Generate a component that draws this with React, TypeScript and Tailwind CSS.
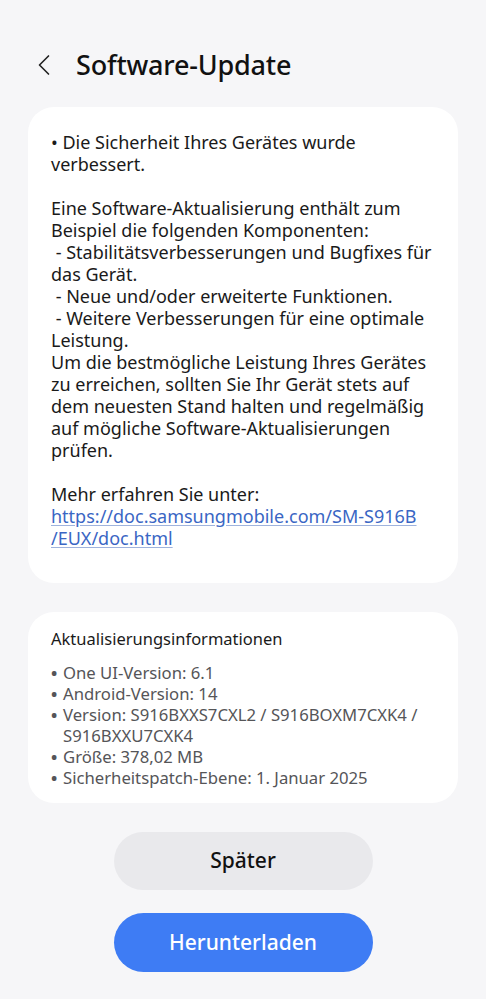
import { ChevronLeft } from 'lucide-react';

const infoLines = [
  'One UI-Version: 6.1',
  'Android-Version: 14',
  'Version: S916BXXS7CXL2 / S916BOXM7CXK4 / S916BXXU7CXK4',
  'Größe: 378,02 MB',
  'Sicherheitspatch-Ebene: 1. Januar 2025',
];

export default function App() {
  return (
    <div
      className="min-h-[999px] w-full bg-[#f6f6f8] text-[#111111]"
      style={{ fontFamily: '"Noto Sans", "Open Sans", sans-serif' }}
    >
      {/* header */}
      <div className="flex items-center h-[130px] pl-[26px] pt-[2px] pb-[2px]">
        <ChevronLeft className="w-[36px] h-[36px] text-[#222]" strokeWidth={1.1} />
        <h1 className="ml-[14px] text-[27px] font-medium tracking-[-0.2px] text-[#111]">Software-Update</h1>
      </div>

      <div className="px-[28px] -mt-[23px]">
        {/* release notes */}
        <div className="bg-white rounded-[26px] pl-[23px] pr-[12px] pt-[24px] pb-[34px] text-[18px] leading-[22px] text-[#1a1a1a]">
          <p>• Die Sicherheit Ihres Gerätes wurde<br />verbessert.</p>
          <p className="mt-[22px]">
            Eine Software-Aktualisierung enthält zum<br />
            Beispiel die folgenden Komponenten:<br />
            &nbsp;- Stabilitätsverbesserungen und Bugfixes für<br />
            das Gerät.<br />
            &nbsp;- Neue und/oder erweiterte Funktionen.<br />
            &nbsp;- Weitere Verbesserungen für eine optimale<br />
            Leistung.<br />
            Um die bestmögliche Leistung Ihres Gerätes<br />
            zu erreichen, sollten Sie Ihr Gerät stets auf<br />
            dem neuesten Stand halten und regelmäßig<br />
            auf mögliche Software-Aktualisierungen<br />
            prüfen.
          </p>
          <p className="mt-[22px]">Mehr erfahren Sie unter:</p>
          <a className="text-[#3a66c4] underline decoration-[#9fb3dd] underline-offset-[2px] whitespace-nowrap">
            https://doc.samsungmobile.com/SM-S916B<br />/EUX/doc.html
          </a>
        </div>

        {/* update info */}
        <div className="mt-[29px] bg-white rounded-[26px] pl-[23px] pr-[12px] pt-[16px] pb-[15px]">
          <p className="text-[16.5px] leading-[22px] text-[#1a1a1a]">Aktualisierungsinformationen</p>
          <ul className="mt-[12px] text-[16.7px] leading-[21px] text-[#555558]">
            {infoLines.map((line) => (
              <li key={line} className="flex">
                <span className="w-[12px] shrink-0 font-bold">•</span>
                <span className="whitespace-nowrap">
                  {line === infoLines[2] ? <>Version: S916BXXS7CXL2 / S916BOXM7CXK4 /<br />S916BXXU7CXK4</> : line}
                </span>
              </li>
            ))}
          </ul>
        </div>

        {/* buttons */}
        <div className="mt-[29px] flex flex-col items-center gap-[23px]">
          <button className="w-[259px] h-[58px] rounded-full bg-[#e9e9ec] text-[21px] font-medium text-[#111]">
            Später
          </button>
          <button className="w-[259px] h-[59px] rounded-full bg-[#3e7cf4] text-[21px] font-medium text-white">
            Herunterladen
          </button>
        </div>
      </div>
    </div>
  );
}
